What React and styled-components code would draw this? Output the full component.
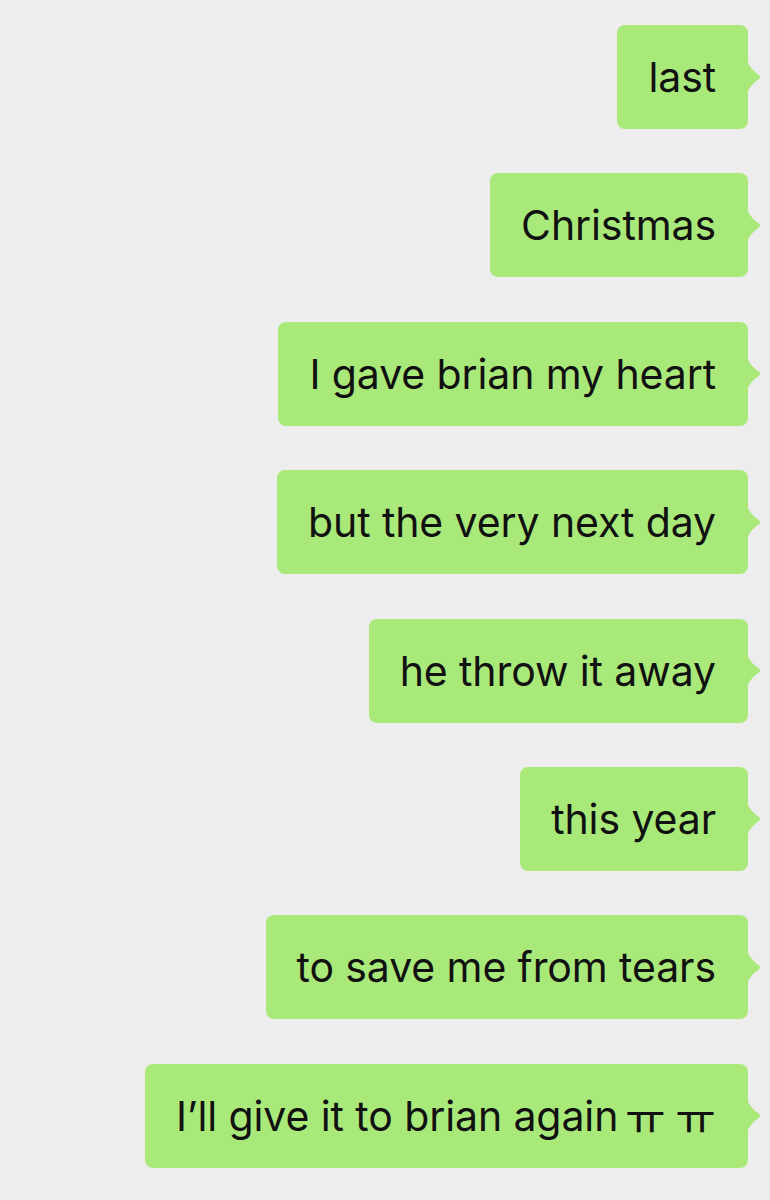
import React from 'react';
import styled, { createGlobalStyle } from 'styled-components';

const GlobalStyle = createGlobalStyle`
  html, body {
    margin: 0;
    padding: 0;
    background: #ededed;
  }
  body {
    font-family: Inter, "Noto Sans", "Liberation Sans", sans-serif;
  }
`;

const Thread = styled.div`
  display: flex;
  flex-direction: column;
  align-items: flex-end;
  gap: 44.4px;
  padding: 25px 22px 30px 0;
  min-height: 1200px;
  box-sizing: border-box;
  background: #ededed;
`;

const Bubble = styled.div`
  position: relative;
  display: flex;
  align-items: center;
  height: 104px;
  padding: 0 32px 0 31px;
  box-sizing: border-box;
  background: #a9e97a;
  border-radius: 8px;
  color: #111;
  font-size: 41px;
  letter-spacing: -0.1px;
  white-space: nowrap;

  &::after {
    content: '';
    position: absolute;
    right: -13px;
    top: 36px;
    width: 14px;
    height: 32px;
    background: #a9e97a;
    clip-path: path('M0 0 Q4 9 12 14 Q14 16 12 18 Q4 23 0 32 Z');
  }
`;

const Jamo = styled.span`
  font-family: "Noto Sans CJK KR", "Noto Sans", sans-serif;
  font-size: 1.08em;
  margin-left: 0.15em;
`;

const lines = [
  { text: 'last' },
  { text: 'Christmas' },
  { text: 'I gave brian my heart' },
  { text: 'but the very next day' },
  { text: 'he throw it away' },
  { text: 'this year' },
  { text: 'to save me from tears' },
  { text: 'I\u2019ll give it to brian again', jamo: '\u3160 \u3160' },
];

export default function App() {
  return (
    <>
      <GlobalStyle />
      <Thread>
        {lines.map(({ text, jamo }) => (
          <Bubble key={text}>
            {text}
            {jamo && <Jamo>{jamo}</Jamo>}
          </Bubble>
        ))}
      </Thread>
    </>
  );
}
